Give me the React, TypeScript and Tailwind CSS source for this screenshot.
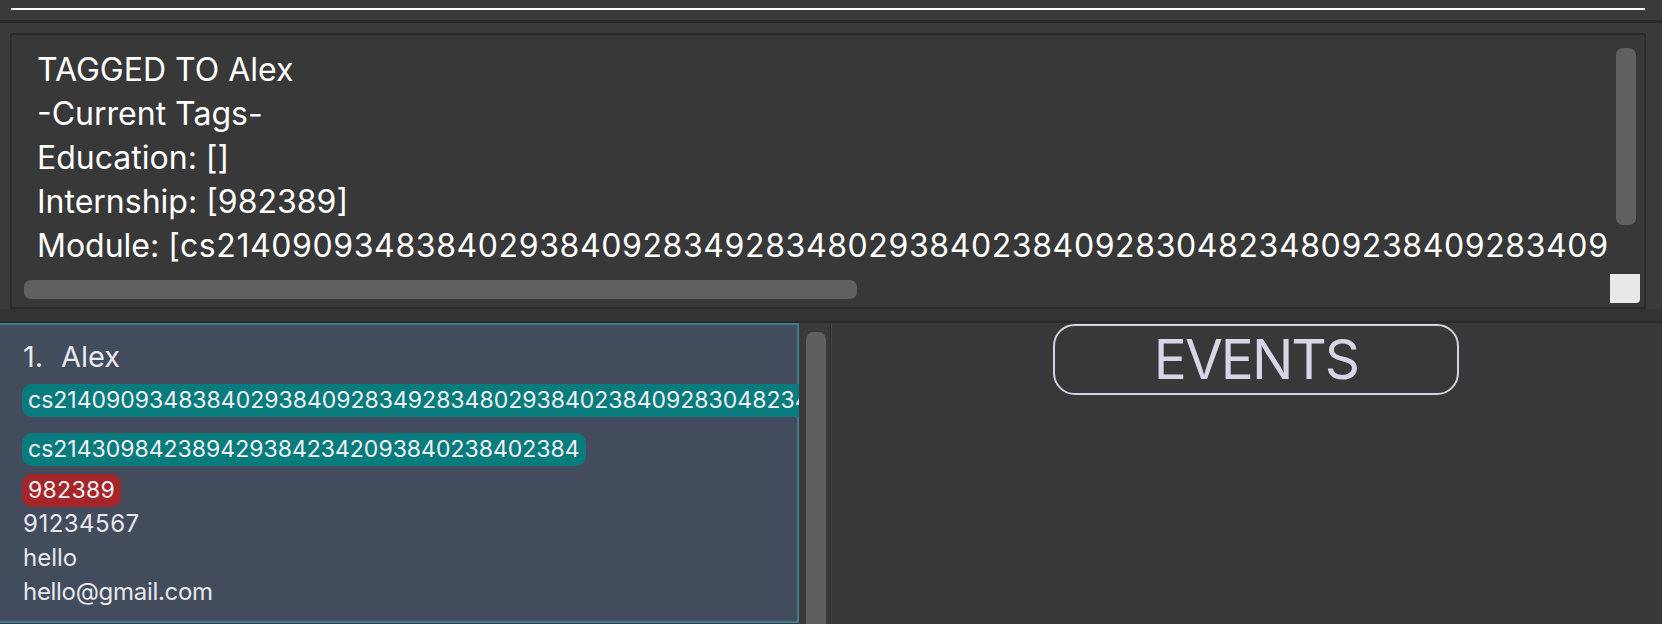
import React from "react";

const MOD = "cs21409093483840293840928349283480293840238409283048234809238409283409";
const MOD2 = "cs2143098423894293842342093840238402384";

export default function App() {
  return (
    <div className="w-[1662px] h-[624px] overflow-hidden bg-[#3a3a3a] font-['Inter','Liberation_Sans',sans-serif] flex flex-col">
      {/* command box */}
      <div className="h-[20px] pt-[8px] bg-[#3a3a3a]">
        <div className="h-[2px] bg-white ml-[11px] mr-[17px]" />
      </div>
      <div className="h-[3px] bg-[#2a2a2a]" />
      {/* result display */}
      <div className="pt-[10px] pl-[10px] pr-[16px] bg-[#3a3a3a]">
        <div className="relative h-[276px] border-2 border-[#2b2b2b] bg-[#383838]">
          <div className="pt-[13px] pl-[25px] mr-[35px] overflow-hidden text-white text-[32px] leading-[44px] whitespace-pre">
            <div>TAGGED TO Alex</div>
            <div>-Current Tags-</div>
            <div>Education: []</div>
            <div>Internship: [982389]</div>
            <div>
              Module: [<span className="tracking-[0.6px]">{MOD}</span>
            </div>
          </div>
          <div className="absolute left-[12px] top-[245px] w-[833px] h-[19px] rounded-[7px] bg-[#606060]" />
          <div className="absolute left-[1604px] top-[13px] w-[20px] h-[177px] rounded-[7px] bg-[#606060]" />
          <div className="absolute left-[1598px] top-[239px] w-[30px] h-[29px] rounded-br-[4px] bg-[#e8e8e8]" />
        </div>
      </div>
      <div className="h-[12px] bg-[#333333]" />
      <div className="h-[2px] bg-[#2a2a2a]" />
      {/* split */}
      <div className="flex h-[301px]">
        <div className="w-[799px] overflow-hidden">
          <div className="h-[300px] border-t-2 border-r-2 border-b-2 border-[#3c7b92] bg-[#424c5d] pl-[23px] text-[#e8e8ee]">
            <div className="mt-[14px] flex text-[29px] leading-[36px]">
              <span className="w-[38px]">1.</span>
              <span>Alex</span>
            </div>
            <div className="mt-[9px] -ml-[1px] whitespace-nowrap">
              <span className="inline-block h-[33px] leading-[33px] px-[6px] rounded-[10px] bg-[#087b7c] text-[23px] text-[#f0f0f4]">
                {MOD}
              </span>
            </div>
            <div className="mt-[16px] -ml-[1px] whitespace-nowrap">
              <span className="inline-block h-[33px] leading-[33px] px-[6px] rounded-[10px] bg-[#087b7c] text-[23px] text-[#f0f0f4]">
                {MOD2}
              </span>
            </div>
            <div className="mt-[8px] -ml-[1px] whitespace-nowrap">
              <span className="inline-block h-[33px] leading-[33px] px-[6px] rounded-[10px] bg-[#a52528] text-[23px] text-[#f0f0f4] tracking-[0.3px]">
                982389
              </span>
            </div>
            <div className="text-[24px] leading-[34px] tracking-[0.5px]">91234567</div>
            <div className="text-[24px] leading-[34px]">hello</div>
            <div className="text-[24px] leading-[34px] tracking-[-0.3px]">hello@gmail.com</div>
          </div>
        </div>
        <div className="w-[31px] bg-[#3a3a3a] pt-[9px] pl-[7px] flex">
          <div className="w-[20px] h-full rounded-t-[8px] bg-[#5f5f5f]" />
        </div>
        <div className="w-[1px] bg-[#2c2c2c]" />
        <div className="w-[1px] bg-[#474747]" />
        <div className="flex-1 bg-[#383838] pt-[1px] pl-[221px]">
          <div className="w-[406px] h-[71px] border-2 border-[#d2d2e2] rounded-[22px] flex items-center justify-center text-[55px] text-[#d6d6e8] leading-none tracking-[-2px]">
            EVENTS
          </div>
        </div>
      </div>
    </div>
  );
}
